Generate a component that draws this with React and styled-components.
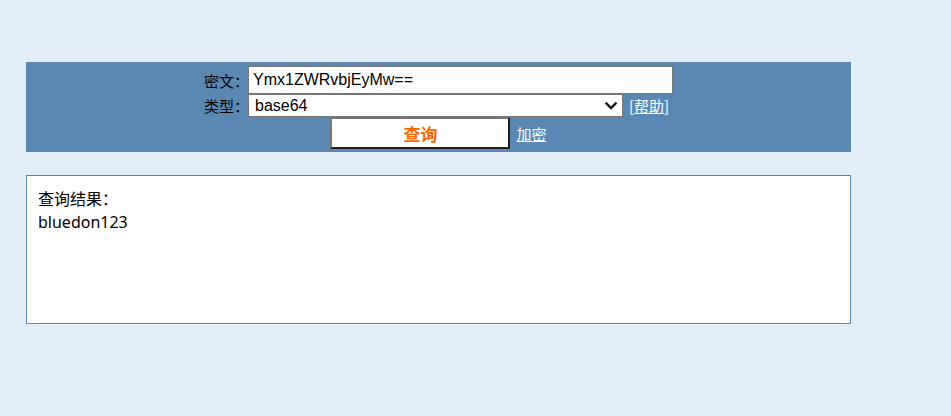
import React from "react";
import styled, { createGlobalStyle } from "styled-components";

const Global = createGlobalStyle`
  html, body { margin: 0; padding: 0; }
  body {
    background: #e1edf7;
    font-family: "Noto Sans", "Noto Sans CJK SC", sans-serif;
    color: #000;
  }
`;

const Page = styled.div`
  padding: 62px 0 0 26px;
  width: 825px;
`;

const Panel = styled.form`
  background: #5b87b3;
  padding: 4px 0 3px;
  display: grid;
  grid-template-columns: 44px 425px;
  justify-content: center;
  align-items: center;
`;

const Label = styled.label`
  font-family: "Noto Sans CJK SC", sans-serif;
  font-size: 15px;
  text-align: right;
  white-space: nowrap;
`;

const TextInput = styled.input`
  box-sizing: border-box;
  width: 425px;
  height: 28px;
  border: 1px solid #767676;
  border-radius: 0;
  padding: 0 4px;
  font-family: "Liberation Sans", Arial, sans-serif;
  font-size: 16px;
  color: #000;
  background: #fff;
  outline: none;
`;

const Field = styled.div`
  display: flex;
  align-items: center;
  gap: 6px;
`;

const SelectWrap = styled.div`
  position: relative;
  width: 375px;
  height: 23px;
`;

const Select = styled.select`
  appearance: none;
  -webkit-appearance: none;
  box-sizing: border-box;
  width: 100%;
  height: 100%;
  border: 1px solid #767676;
  border-radius: 0;
  padding: 0 24px 0 6px;
  font-family: "Liberation Sans", Arial, sans-serif;
  font-size: 16px;
  color: #000;
  background: #fff;
  outline: none;
`;

const Chevron = styled.svg`
  position: absolute;
  right: 6px;
  top: 8px;
  width: 12px;
  height: 8px;
  pointer-events: none;
`;

const Help = styled.span`
  font-family: "Noto Sans CJK SC", sans-serif;
  font-size: 15px;
  color: #fff;
  white-space: nowrap;
`;

const Link = styled.a`
  font-family: "Noto Sans CJK SC", sans-serif;
  font-size: 15px;
  color: #fff;
  text-decoration: underline;
  white-space: nowrap;
`;

const ActionRow = styled.div`
  grid-column: 1 / -1;
  display: flex;
  justify-content: center;
  align-items: center;
  gap: 6px;
`;

const SubmitButton = styled.button`
  box-sizing: border-box;
  width: 180px;
  height: 32px;
  background: #fff;
  border-style: solid;
  border-width: 2px;
  border-color: #767676 #1f1f1f #1f1f1f #767676;
  border-radius: 0;
  font-family: "Noto Sans CJK SC", sans-serif;
  font-size: 17px;
  font-weight: bold;
  color: #ff6600;
  padding: 0;
  line-height: 1;
`;

const ResultBox = styled.div`
  box-sizing: border-box;
  margin-top: 23px;
  height: 149px;
  background: #fff;
  border: 1px solid #5a86b6;
  padding: 12px 11px;
  font-size: 16px;
  line-height: 23px;
`;

const ResultLine = styled.div`
  font-family: "Noto Sans", "Noto Sans CJK SC", sans-serif;
`;

export default function App() {
  return (
    <>
      <Global />
      <Page>
        <Panel onSubmit={(e) => e.preventDefault()}>
          <Label htmlFor="cipher">密文：</Label>
          <TextInput id="cipher" defaultValue="Ymx1ZWRvbjEyMw==" />
          <Label htmlFor="kind">类型：</Label>
          <Field>
            <SelectWrap>
              <Select id="kind" defaultValue="base64">
                <option value="base64">base64</option>
                <option value="md5">md5</option>
              </Select>
              <Chevron viewBox="0 0 12 8">
                <path d="M1.5 1.5 L6 6 L10.5 1.5" fill="none" stroke="#111" strokeWidth="2.4" strokeLinecap="square" />
              </Chevron>
            </SelectWrap>
            <Help>
              [<Link href="#">帮助</Link>]
            </Help>
          </Field>
          <ActionRow>
            <SubmitButton type="submit">查询</SubmitButton>
            <Link href="#">加密</Link>
          </ActionRow>
        </Panel>
        <ResultBox>
          <ResultLine>查询结果：</ResultLine>
          <ResultLine>bluedon123</ResultLine>
        </ResultBox>
      </Page>
    </>
  );
}
